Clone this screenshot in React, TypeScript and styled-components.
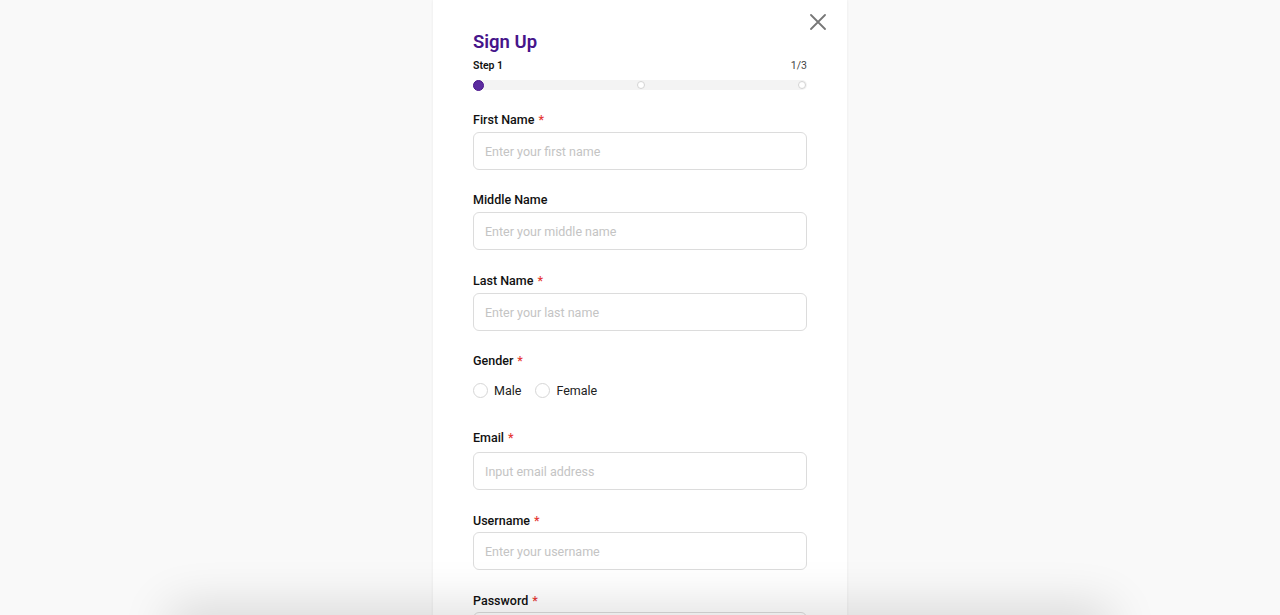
import React from "react";
import styled, { createGlobalStyle } from "styled-components";

const GlobalStyle = createGlobalStyle`
  body {
    margin: 0;
    background: #f9f9f9;
    font-family: Roboto, "Liberation Sans", Arial, sans-serif;
    color: #111;
  }
`;

type Field = {
  label: string;
  placeholder: string;
  required?: boolean;
  type?: string;
  gap: number;
  space: number;
};

const topFields: Field[] = [
  { label: "First Name", placeholder: "Enter your first name", required: true, gap: 4, space: 22 },
  { label: "Middle Name", placeholder: "Enter your middle name", gap: 4, space: 23 },
  { label: "Last Name", placeholder: "Enter your last name", required: true, gap: 4, space: 22 },
];

const bottomFields: Field[] = [
  { label: "Email", placeholder: "Input email address", required: true, gap: 6, space: 23 },
  { label: "Username", placeholder: "Enter your username", required: true, gap: 3, space: 23 },
  { label: "Password", placeholder: "Enter your password", required: true, type: "password", gap: 3, space: 23 },
];

const FormField: React.FC<{ field: Field }> = ({ field }) => (
  <FieldGroup $gap={field.gap} $space={field.space}>
    <Label>
      {field.label}
      {field.required && <Star>*</Star>}
    </Label>
    <Input placeholder={field.placeholder} type={field.type || "text"} />
  </FieldGroup>
);

// Sign up page, first step of the form
const App: React.FC = () => {
  return (
    <>
      <GlobalStyle />
      <Page>
        <Card>
          <CloseButton aria-label="Close">
            <svg width="16" height="16" viewBox="0 0 16 16">
              <path d="M1 1 L15 15 M15 1 L1 15" stroke="#777" strokeWidth="1.8" strokeLinecap="round" />
            </svg>
          </CloseButton>
          <Title>Sign Up</Title>
          <StepRow>
            <StepLabel>Step 1</StepLabel>
            <StepCount>1/3</StepCount>
          </StepRow>
          <Progress>
            <Dot $active />
            <Dot />
            <Dot />
          </Progress>

          <Form>
            {topFields.map((f) => (
              <FormField key={f.label} field={f} />
            ))}

            <GenderGroup>
              <Label>
                Gender<Star>*</Star>
              </Label>
              <RadioRow>
                <RadioOption>
                  <Radio />
                  Male
                </RadioOption>
                <RadioOption>
                  <Radio />
                  Female
                </RadioOption>
              </RadioRow>
            </GenderGroup>

            {bottomFields.map((f) => (
              <FormField key={f.label} field={f} />
            ))}
          </Form>
        </Card>
      </Page>
      <BottomShade />
    </>
  );
};

export default App;

// Styles
const Page = styled.div`
  display: flex;
  justify-content: center;
`;

const Card = styled.div`
  position: relative;
  width: 414px;
  box-sizing: border-box;
  padding: 31px 40px 60px;
  background: #fff;
  box-shadow: 0 0 3px rgba(0, 0, 0, 0.07);
`;

const CloseButton = styled.button`
  position: absolute;
  top: 14px;
  right: 21px;
  padding: 0;
  border: none;
  background: none;
  cursor: pointer;
  display: flex;
`;

const Title = styled.h1`
  margin: 0;
  font-size: 18.5px;
  line-height: 22px;
  font-weight: 600;
  color: #46148a;
`;

const StepRow = styled.div`
  display: flex;
  justify-content: space-between;
  align-items: center;
  margin-top: 7px;
  font-size: 10.5px;
  line-height: 12px;
`;

const StepLabel = styled.span`
  font-weight: 600;
`;

const StepCount = styled.span`
  color: #444;
`;

const Progress = styled.div`
  display: flex;
  justify-content: space-between;
  align-items: center;
  margin-top: 8px;
  height: 10px;
  border-radius: 5px;
  background: #f3f3f3;
`;

const Dot = styled.span<{ $active?: boolean }>`
  box-sizing: border-box;
  width: ${(p) => (p.$active ? "11px" : "8px")};
  height: ${(p) => (p.$active ? "11px" : "8px")};
  margin: ${(p) => (p.$active ? "0" : "0 1px")};
  border-radius: 50%;
  background: ${(p) => (p.$active ? "#5b2c9f" : "#fff")};
  border: 1px solid ${(p) => (p.$active ? "#4a148c" : "#d4d4d4")};
`;

const Form = styled.div`
  display: flex;
  flex-direction: column;
  margin-top: 22px;
`;

const FieldGroup = styled.div<{ $gap: number; $space: number }>`
  display: flex;
  flex-direction: column;
  gap: ${(p) => p.$gap}px;
  margin-bottom: ${(p) => p.$space}px;
`;

const Label = styled.label`
  font-size: 12.5px;
  line-height: 16px;
  font-weight: 500;
  color: #111;
`;

const Star = styled.span`
  color: #e53935;
  margin-left: 4px;
`;

const Input = styled.input`
  box-sizing: border-box;
  width: 100%;
  height: 38px;
  padding: 0 11px;
  border: 1px solid #dcdcdc;
  border-radius: 6px;
  font-family: inherit;
  font-size: 12.5px;
  color: #111;
  outline: none;

  &::placeholder {
    color: #c4c4c4;
  }
`;

const GenderGroup = styled.div`
  display: flex;
  flex-direction: column;
  margin-bottom: 31px;
`;

const RadioRow = styled.div`
  display: flex;
  align-items: center;
  gap: 14px;
  margin-top: 12px;
  height: 18px;
`;

const RadioOption = styled.label`
  display: flex;
  align-items: center;
  gap: 6px;
  font-size: 12.5px;
  color: #222;
  cursor: pointer;
`;

const Radio = styled.span`
  box-sizing: border-box;
  width: 15px;
  height: 15px;
  border-radius: 50%;
  border: 1px solid #d6d6d6;
  background: #fff;
`;

const BottomShade = styled.div`
  position: fixed;
  left: 170px;
  right: 170px;
  top: 100vh;
  height: 40px;
  box-shadow: 0 -6px 50px rgba(0, 0, 0, 0.16);
  pointer-events: none;
`;
